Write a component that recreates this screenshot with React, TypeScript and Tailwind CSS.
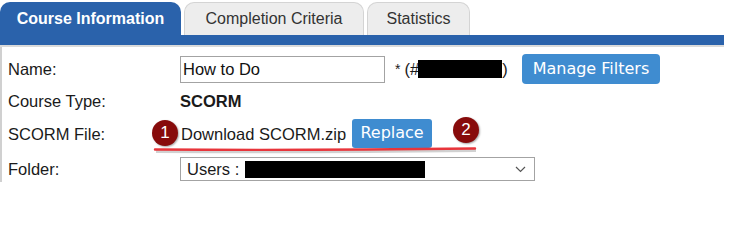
import React from 'react';

const tabs = [
  { label: 'Course Information', active: true, width: 'w-[181px]' },
  { label: 'Completion Criteria', active: false, width: 'w-[180px]' },
  { label: 'Statistics', active: false, width: 'w-[103px]' },
];

function Badge({ n, className }: { n: number; className: string }) {
  return (
    <div
      className={`absolute w-[26px] h-[26px] rounded-full bg-[#870b0b] text-white text-[17px] flex items-center justify-center shadow-[1px_1px_2px_rgba(0,0,0,0.35)] ${className}`}
    >
      {n}
    </div>
  );
}

export default function App() {
  return (
    <div className="relative w-[751px] h-[209px] bg-white font-['Liberation_Sans',Arial,sans-serif] text-[#1a1a1a]">
      {/* tabs */}
      <div className="flex items-end gap-[3px] pt-[2px] w-[724px]">
        {tabs.map(tab => (
          <div
            key={tab.label}
            className={`${tab.width} h-[33px] rounded-t-[10px] flex items-center justify-center text-[16px] ${
              tab.active
                ? 'bg-[#2a62ab] text-white font-bold'
                : 'bg-[#ededed] text-[#333] border border-b-0 border-[#d4d4d4]'
            }`}
          >
            {tab.label}
          </div>
        ))}
      </div>
      <div className="w-[724px] h-[10px] bg-[#2a62ab]" />
      <div className="w-[724px] h-[2px] bg-[#dadada]" />

      {/* form panel */}
      <div className="w-[724px] border-l-2 border-[#d0d0d0] pt-[7px] pb-[1px] text-[16.5px]">
        <div className="flex items-center h-[30px]">
          <div className="w-[178px] pl-[6px]">Name:</div>
          <input
            readOnly
            value="How to Do"
            className="w-[205px] h-[27px] border border-[#a3a3a3] px-[2px] text-[16.5px] text-[#111] outline-none"
          />
          <span className="ml-[10px] text-[14px]">*</span>
          <span className="ml-[4px]">(#</span>
          <span className="w-[84px] h-[18px] bg-black -ml-[1px]" />
          <span>)</span>
          <button className="ml-[14px] h-[30px] px-[11px] rounded-[4px] bg-[#3f8cd0] text-white font-['DejaVu_Sans',Verdana,sans-serif] text-[16px]">
            Manage Filters
          </button>
        </div>

        <div className="flex items-center h-[34px]">
          <div className="w-[178px] pl-[6px]">Course Type:</div>
          <span className="font-bold">SCORM</span>
        </div>

        <div className="flex items-center h-[32px]">
          <div className="w-[178px] pl-[6px]">SCORM File:</div>
          <span className="ml-[1px]">Download SCORM.zip</span>
          <button className="ml-[6px] h-[29px] w-[80px] rounded-[3px] bg-[#3f8cd0] text-white font-['DejaVu_Sans',Verdana,sans-serif] text-[16px] -mt-[2px]">
            Replace
          </button>
        </div>

        <div className="flex items-center h-[24px] mt-[7px]">
          <div className="w-[178px] pl-[6px]">Folder:</div>
          <div className="relative w-[355px] h-[24px] border border-[#a3a3a3] flex items-center pl-[6px]">
            <span>Users :</span>
            <span className="ml-[6px] w-[180px] h-[17px] bg-black" />
            <svg className="absolute right-[8px] top-[8px]" width="11" height="7" viewBox="0 0 11 7">
              <polyline points="1,1 5.5,5.5 10,1" fill="none" stroke="#555" strokeWidth="1.2" />
            </svg>
          </div>
        </div>
      </div>

      {/* annotations */}
      <svg className="absolute left-[150px] top-[143px]" width="335" height="14" viewBox="0 0 335 14">
        <path d="M5 6.5 Q160 7.5 325 5.5" fill="none" stroke="rgba(0,0,0,0.18)" strokeWidth="3" transform="translate(1,2)" />
        <path d="M5 6.5 Q160 7.5 325 5.5" fill="none" stroke="#e8353b" strokeWidth="2.4" strokeLinecap="round" />
      </svg>
      <Badge n={1} className="left-[152px] top-[120px]" />
      <Badge n={2} className="left-[453px] top-[117px]" />
    </div>
  );
}
